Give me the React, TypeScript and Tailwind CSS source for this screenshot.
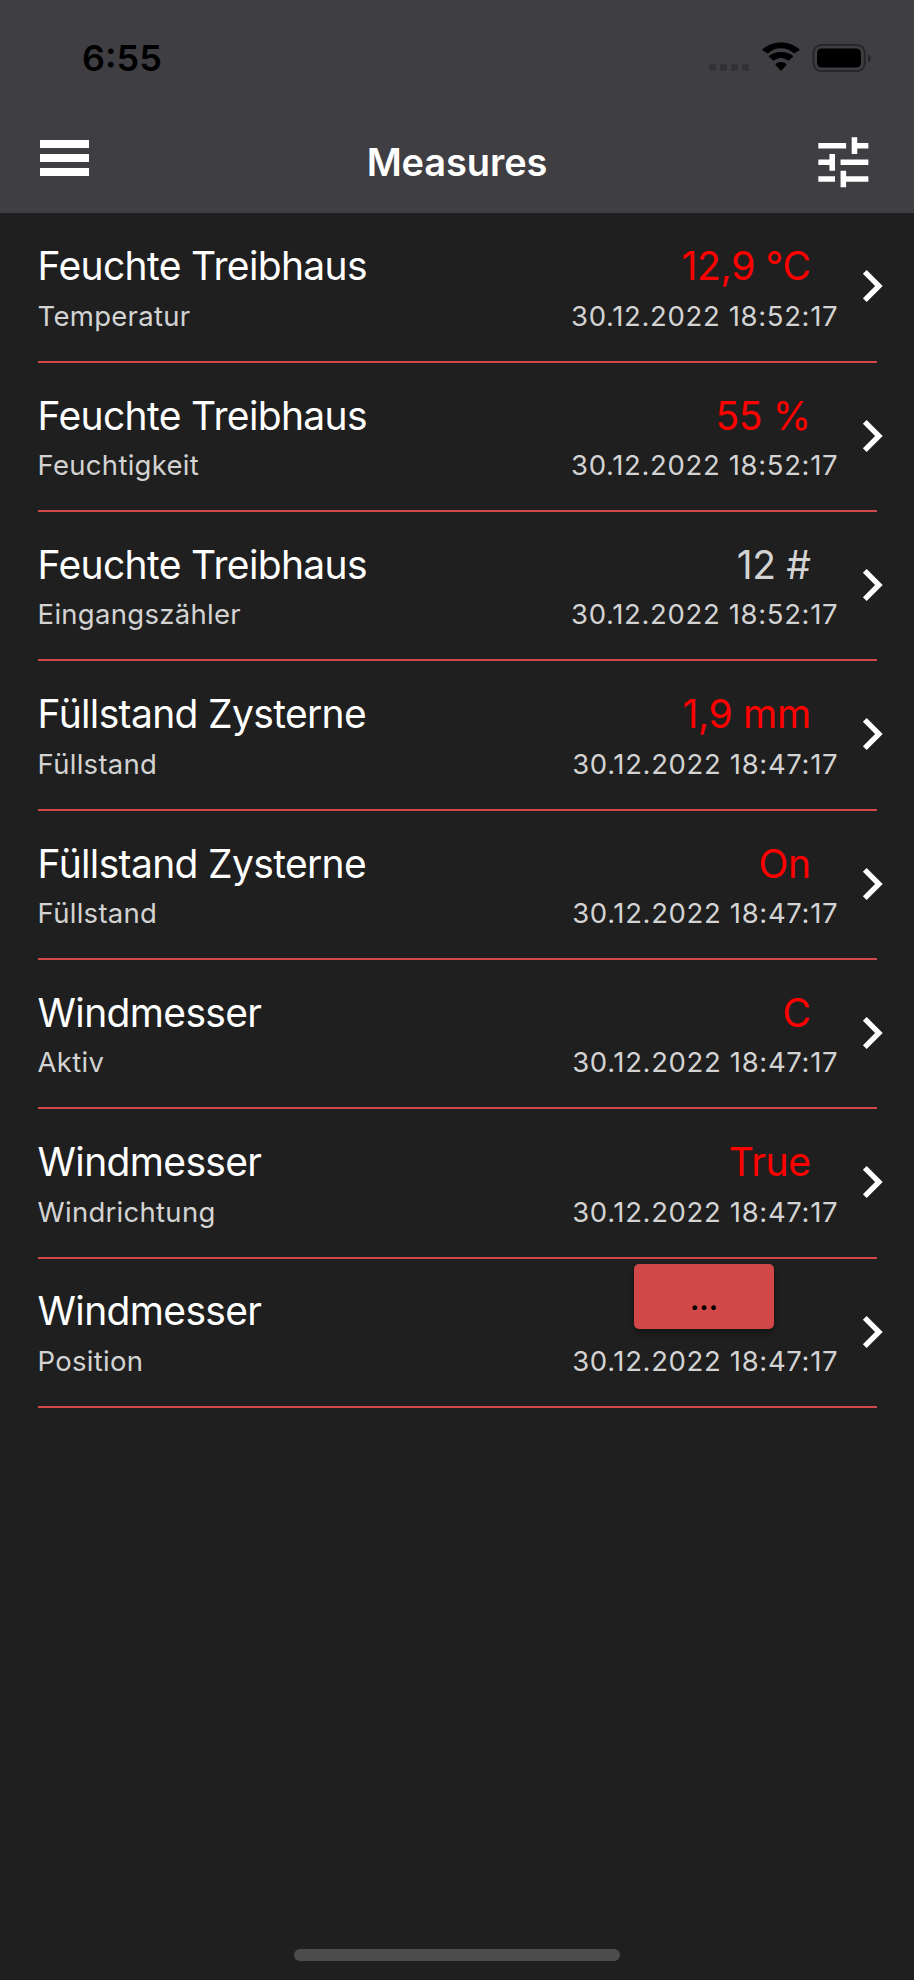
import React from 'react';

interface Measure {
  id: number;
  device: string;
  sensor: string;
  value: string;
  time: string;
  kind: 'alert' | 'normal' | 'button';
}

const measures: Measure[] = [
  { id: 1, device: 'Feuchte Treibhaus', sensor: 'Temperatur', value: '12,9 °C', time: '30.12.2022 18:52:17', kind: 'alert' },
  { id: 2, device: 'Feuchte Treibhaus', sensor: 'Feuchtigkeit', value: '55 %', time: '30.12.2022 18:52:17', kind: 'alert' },
  { id: 3, device: 'Feuchte Treibhaus', sensor: 'Eingangszähler', value: '12 #', time: '30.12.2022 18:52:17', kind: 'normal' },
  { id: 4, device: 'Füllstand Zysterne', sensor: 'Füllstand', value: '1,9 mm', time: '30.12.2022 18:47:17', kind: 'alert' },
  { id: 5, device: 'Füllstand Zysterne', sensor: 'Füllstand', value: 'On', time: '30.12.2022 18:47:17', kind: 'alert' },
  { id: 6, device: 'Windmesser', sensor: 'Aktiv', value: 'C', time: '30.12.2022 18:47:17', kind: 'alert' },
  { id: 7, device: 'Windmesser', sensor: 'Windrichtung', value: 'True', time: '30.12.2022 18:47:17', kind: 'alert' },
  { id: 8, device: 'Windmesser', sensor: 'Position', value: '...', time: '30.12.2022 18:47:17', kind: 'button' },
];

function StatusBar() {
  return (
    <div className="flex h-[116px] items-start justify-between pl-[82px] pr-[42px] text-black">
      <span className="mt-[34px] text-[36px] leading-[48px] font-semibold">6:55</span>
      <div className="mt-[42px] flex">
        <div className="mt-[22px] mr-[13px] flex gap-[3.6px]">
          {[0, 1, 2, 3].map((dot) => (
            <span key={dot} className="h-[7px] w-[7.3px] rounded-[2px] bg-[#323234]" />
          ))}
        </div>
        <svg className="mr-[12px] h-[30px] w-[38px]" viewBox="0 0.6 38 30" fill="currentColor">
          <path d="M19 6.8c4.9 0 9.4 1.9 12.8 5.1.3.2.7.2.9 0l4.7-3.1c.3-.3.3-.7 0-1C32.5 3.4 26 1 19 1S5.5 3.4.6 7.8c-.3.3-.3.7 0 1l4.7 3.1c.3.3.7.3.9 0C9.6 8.7 14.1 6.800 19 6.800z" />
          <path d="M19 16.6c2.6 0 5 1 6.9 2.6.3.3.7.3.9 0l4.2-3.9c.3-.3.3-.7 0-.9C27.8 12 23.6 10.5 19 10.5S10.2 12 7 14.4c-.3.2-.3.6 0 .9l4.2 3.9c.3.3.7.3 1 0 1.800-1.600 4.200-2.600 6.800-2.600z" />
          <path d="M24.400 22.500c.3.300.300.700 0 1l-4.900 5.500c-.3.300-.7.300-1 0l-4.900-5.500c-.3-.300-.3-.700 0-1 1.400-1.300 3.300-2 5.400-2s4 .7 5.400 2z" />
        </svg>
        <svg className="h-[30px] w-[60px]" viewBox="0 0 60 30">
          <rect x="1.4" y="3" width="51.4" height="26" rx="8" fill="none" stroke="#28282a" strokeWidth="2.2" />
          <rect x="5" y="6.4" width="44" height="19.2" rx="4.5" fill="#000" />
          <path d="M56 12v8.5c1.8-.7 3-2.2 3-4.2s-1.2-3.6-3-4.3z" fill="#28282a" />
        </svg>
      </div>
    </div>
  );
}

function NavBar() {
  return (
    <div className="grid h-[97px] grid-cols-[1fr_auto_1fr] items-start">
      <button className="mt-[24px] ml-[40px] flex w-[49px] flex-col gap-[6.3px]" aria-label="Menu">
        <span className="h-[7.7px] w-full bg-white" />
        <span className="h-[7.7px] w-full bg-white" />
        <span className="h-[7.7px] w-full bg-white" />
      </button>
      <h1 className="mt-[22px] text-[38px] leading-[48px] font-semibold tracking-[-0.1px] text-white">Measures</h1>
      <button className="mt-[12.6px] mr-[37px] justify-self-end" aria-label="Filter">
        <svg className="h-[66.7px] w-[66.7px] text-white" viewBox="0 0 24 24" fill="currentColor">
          <path d="M3 17v2h6v-2H3zM3 5v2h10V5H3zm10 16v-2h8v-2h-8v-2h-2v6h2zM7 9v2H3v2h4v2h2V9H7zm14 4v-2H11v2h10zm-6-4h2V7h4V5h-4V3h-2v6z" />
        </svg>
      </button>
    </div>
  );
}

function MeasureValue({ measure }: { measure: Measure }) {
  if (measure.kind === 'button') {
    return (
      <button className="mt-[5.3px] mr-[64px] mb-[14.6px] h-[65.3px] w-[140.5px] rounded-[5px] bg-[#d24848] pt-[7px] text-[28px] font-bold text-black shadow-[0_4px_6px_rgba(0,0,0,0.35)]">
        {measure.value}
      </button>
    );
  }
  return (
    <span
      className={`mt-[28.8px] mr-[27.5px] mb-[8.4px] text-[39px] leading-[48px] tracking-[-0.35px] ${
        measure.kind === 'alert' ? 'text-[#ff0000]' : 'text-[#d3d3d3]'
      }`}
    >
      {measure.value}
    </span>
  );
}

function MeasureRow({ measure }: { measure: Measure }) {
  return (
    <li className="mr-[37.5px] ml-[37.6px] flex h-[149.33px] justify-between border-b-[2.5px] border-[#d24848]">
      <div className="flex flex-col">
        <span className="mt-[28.8px] mb-[8.4px] text-[39px] leading-[48px] tracking-[-0.65px] text-white">
          {measure.device}
        </span>
        <span className="text-[27.5px] leading-[34px] tracking-[0.28px] text-[#d3d3d3]">{measure.sensor}</span>
      </div>
      <div className="mr-[-27px] flex">
        <div className="flex flex-col items-end">
          <MeasureValue measure={measure} />
          <span className="text-[27.5px] leading-[34px] tracking-[0.65px] text-[#d3d3d3]">{measure.time}</span>
        </div>
        <svg className="mt-[41px] ml-[1.3px] h-[64px] w-[64px] shrink-0 text-white" viewBox="0 0 24 24" fill="currentColor">
          <path d="M10 6L8.59 7.41 13.17 12l-4.58 4.59L10 18l6-6z" />
        </svg>
      </div>
    </li>
  );
}

export default function App() {
  return (
    <div className="flex h-[1980px] w-[914px] flex-col overflow-hidden bg-[#1f1f1f] font-['Inter',sans-serif]">
      <header className="h-[213.4px] shrink-0 bg-[#3f3e43]">
        <StatusBar />
        <NavBar />
      </header>
      <ul className="flex-1">
        {measures.map((measure) => (
          <MeasureRow key={measure.id} measure={measure} />
        ))}
      </ul>
      <div className="mx-auto mb-[19px] h-[12px] w-[326px] rounded-full bg-[#4c4c4c]" />
    </div>
  );
}
